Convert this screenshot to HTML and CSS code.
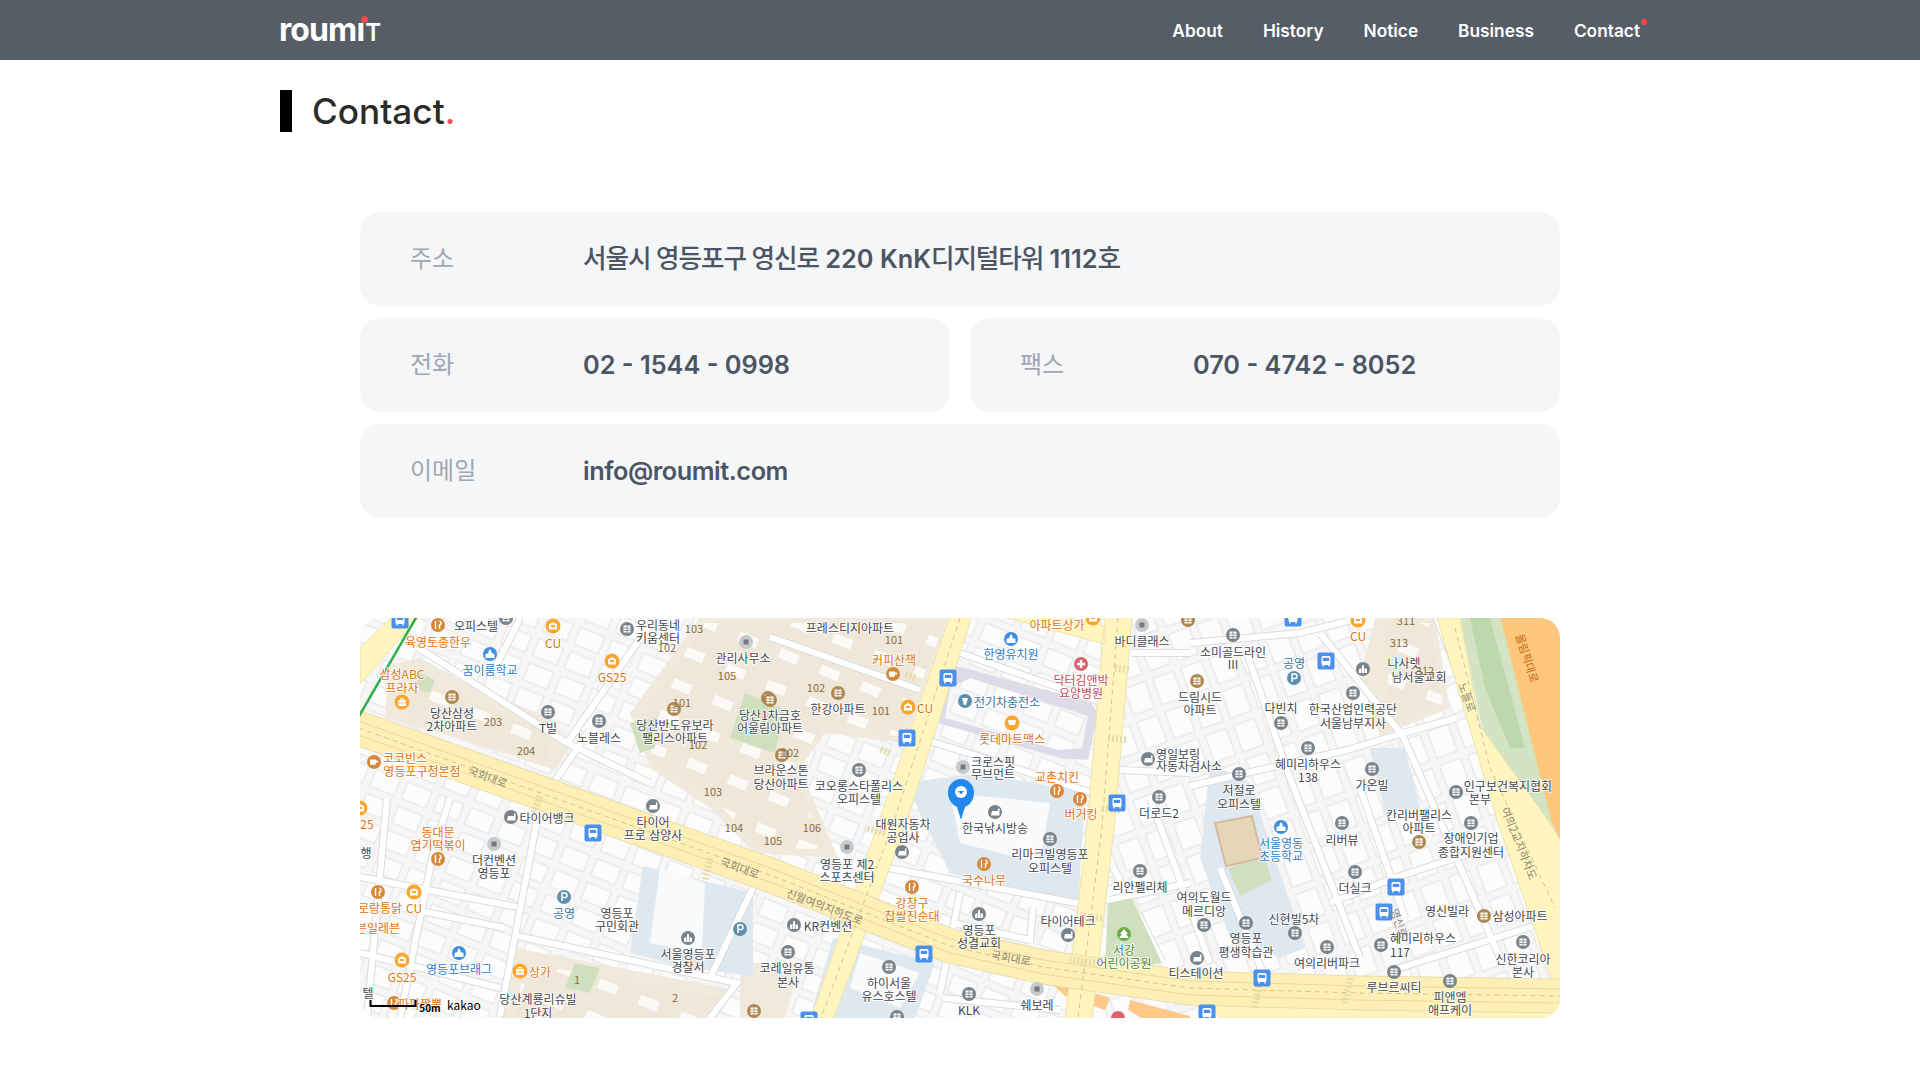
FILE: index.html
```html
<!DOCTYPE html>
<html lang="ko">
<head>
<meta charset="utf-8">
<title>Contact - roumit</title>
<link rel="stylesheet" href="styles.css">
</head>
<body>
<header class="topbar">
  <div class="topbar-inner">
    <a class="logo">roumı<span class="logo-cap">T</span><span class="logo-dot"></span></a>
    <nav class="nav">
      <a>About</a>
      <a>History</a>
      <a>Notice</a>
      <a>Business</a>
      <a class="nav-active">Contact</a>
    </nav>
  </div>
</header>
<main class="page">
  <h1 class="title">Contact<span class="title-dot">.</span></h1>
  <section class="content">
    <div class="info-grid">
      <div class="card card-wide"><span class="card-label">주소</span><span class="card-value card-value-ko"><span class="ko">서울시 영등포구 영신로</span> 220 KnK<span class="ko">디지털타워</span> 1112<span class="ko">호</span></span></div>
      <div class="card"><span class="card-label">전화</span><span class="card-value">02 - 1544 - 0998</span></div>
      <div class="card"><span class="card-label">팩스</span><span class="card-value">070 - 4742 - 8052</span></div>
      <div class="card card-wide"><span class="card-label">이메일</span><span class="card-value card-value-mail">info@roumit.com</span></div>
    </div>
    <div class="map">
      <svg class="map-svg" viewBox="0 0 1200 400" width="1200" height="400" xmlns="http://www.w3.org/2000/svg">
        <defs>
          <pattern id="lotA" width="34" height="26" patternUnits="userSpaceOnUse" patternTransform="rotate(22)">
            <rect width="34" height="26" fill="#f6f6f6"/>
            <rect x="4" y="4" width="26" height="18" fill="#fcfcfc" stroke="#e2e2e2"/>
          </pattern>
          <pattern id="lotB" width="30" height="36" patternUnits="userSpaceOnUse" patternTransform="rotate(-20)">
            <rect width="30" height="36" fill="#f6f6f6"/>
            <rect x="4" y="4" width="22" height="28" fill="#fcfcfc" stroke="#e2e2e2"/>
          </pattern>
          <pattern id="lotC" width="44" height="34" patternUnits="userSpaceOnUse" patternTransform="rotate(22)">
            <rect width="44" height="34" fill="#efe7da"/>
            <rect x="6" y="6" width="20" height="10" fill="#fbfaf7"/>
          </pattern>
          <g id="roads">
            <path d="M57 29L207 125L290 165M207 125L270 35L295 0M160 0L130 60M190 170L230 112"/>
            <path d="M0 259L157 289M73 235L40 400M177 202L140 398M157 318L377 365L350 400M27 180L7 400M90 180L80 212M0 335L140 370M45 290L145 310"/>
            <path d="M410 19L560 72M567 122L742 178M600 35L743 85M523 249L727 287M600 275L580 375M673 289L670 325M593 305L670 322M583 380L700 392"/>
            <path d="M753 249L803 345M750 282L830 265M772 35L830 35M760 152L830 155M887 35L930 160L1000 340M960 15L1043 118L1140 340M1043 115L1097 100M830 168L987 132L1043 115M830 25L940 15L1000 0"/>
            <path d="M970 285L1037 259L1130 229M1033 352L1193 302M1077 0L1190 300L1200 330M860 250L905 360M790 180L850 345M1000 170L1045 300M400 255L350 360"/>
          </g>
          <g id="b"><circle r="7" fill="#78838c"/><rect x="-3.5" y="-3.5" width="7" height="7" fill="#fff"/><path d="M-3.5 -1H3.5M-3.5 1.5H3.5M0 -3.5V3.5" stroke="#78838c" stroke-width=".8"/></g>
          <g id="a"><circle r="7" fill="#ae8850"/><rect x="-3.5" y="-3.5" width="7" height="7" fill="#fff"/><path d="M-3.5 -1H3.5M-3.5 1.5H3.5M0 -3.5V3.5" stroke="#ae8850" stroke-width=".8"/></g>
          <g id="l"><circle r="7" fill="#c6cacd"/><rect x="-2.5" y="-2.5" width="5" height="5" fill="#6f7a82"/></g>
          <g id="t"><circle r="7" fill="#78838c"/><path d="M-4 3.5L-3 -1H3V-3.5H4.5V3.5Z" fill="#fff"/></g>
          <g id="c"><circle r="7" fill="#78838c"/><path d="M-4 4V0L-1.5 -1V4ZM-1 4V-3L0 -4.5L1 -3V4ZM1.5 4V-1L4 0V4Z" fill="#fff"/></g>
          <g id="o"><circle r="7.5" fill="#fba62f"/><path d="M-4 3.5V-1.5L0 -4L4 -1.5V3.5Z" fill="#fff"/><rect x="-2" y="-1" width="4" height="2" fill="#fba62f"/></g>
          <g id="f"><circle r="7" fill="#d8883a"/><path d="M-2.5 -4V4M1.5 -4C3.5 -3 3.5 0 1.5 0V4" stroke="#fff" stroke-width="1.4" fill="none"/></g>
          <g id="k"><circle r="7" fill="#d8883a"/><path d="M-4 -2.5H2V1C2 2.5 1 3 -1 3C-3 3 -4 2.5 -4 1ZM2 -1.5H4V0.5H2" fill="#fff"/></g>
          <g id="m"><circle r="7.5" fill="#fba62f"/><rect x="-4" y="-2" width="8" height="6" rx="1" fill="#fff"/><path d="M-1.5 -2V-3.5H1.5V-2" stroke="#fff" fill="none"/><path d="M-4 1H4" stroke="#fba62f" stroke-width=".7"/></g>
          <g id="s"><circle r="7" fill="#3f8fdc"/><path d="M-4.5 4V0L-1.5 -1V-2.5L0 -5L1.500 -2.5V-1L4.5 0V4Z" fill="#fff"/></g>
          <g id="p"><circle r="7" fill="#5e90ad"/><path d="M-2 4V-4H1C3.6 -4 3.6 0.5 1 0.5H-2" stroke="#fff" stroke-width="1.5" fill="none"/></g>
          <g id="u"><rect x="-8.5" y="-8.5" width="17" height="17" rx="2" fill="#4a90ec"/><rect x="-4.5" y="-5" width="9" height="9" rx="1.5" fill="#fff"/><rect x="-3.2" y="-3.2" width="6.4" height="3.2" fill="#4a90ec"/><path d="M-3 4V5.5M3 4V5.5" stroke="#fff" stroke-width="1.4"/></g>
        </defs>

        <rect width="760" height="400" fill="url(#lotA)"/>
        <rect x="740" width="460" height="400" fill="url(#lotB)"/>

        <path class="zone-beige" d="M270 95L340 0H590L545 125L465 115L440 150L478 240L395 235L350 190L290 150Z"/>
        <path class="zone-apt" d="M280 100L345 5H585L540 118L465 108L432 150L465 232L398 228L355 182L295 145Z"/>
        <path class="zone-beige" d="M28 48L60 40L115 70L190 100L210 128L195 152L90 118L25 100Z"/>
        <path class="zone-apt" d="M60 60L130 90L185 115L190 145L90 112L45 95Z"/>
        <path class="zone-beige" d="M1015 0H1075L1090 90L1020 118L1000 60Z"/>
        <path class="zone-apt" d="M1025 5H1070L1083 85L1030 105Z"/>
        <path class="zone-beige" d="M155 330L375 372L350 400H140Z"/>
        <path class="zone-apt" d="M165 345L365 380L345 400H155Z"/>
        <path class="zone-beige" d="M380 345L440 345L425 400H380Z"/>
        <path class="zone-park" d="M60 55L75 62L70 75L55 70Z"/>
        <path class="zone-park" d="M385 75L425 92L415 135L370 120Z"/>
        <path class="zone-park" d="M270 105L295 100L295 130L280 135Z"/>
        <path class="zone-park" d="M215 345L240 350L230 375L205 370Z"/>

        <path class="zone-lot" d="M283 248L393 275L393 358L330 350L270 335Z"/>
        <path class="zone-white" d="M300 250L345 265L342 335L290 325Z"/>
        <path class="zone-lot" d="M545 165L620 155L725 175L718 288L590 255L570 215Z"/>
        <path class="zone-white" d="M590 175L690 185L680 245L600 225Z"/>
        <path class="zone-lot" d="M473 320L575 345L555 400H450Z"/>
        <path class="zone-white" d="M500 335L560 355L540 390L490 370Z"/>
        <path class="zone-lot" d="M850 145L890 165L945 330L920 340L870 320L840 240Z"/>
        <path class="zone-lot" d="M1010 130L1045 130L1060 190L1025 195Z"/>
        <path class="zone-purple" d="M575 45L590 55L578 105L700 140L728 142L738 95L730 84L605 50ZM590 70L585 100L698 132L722 130L728 98L610 60Z" fill-rule="evenodd"/>
        <path class="zone-sport" d="M855 205L892 198L902 240L866 248Z"/>
        <path class="zone-park" d="M868 250L905 240L912 262L880 278Z"/>
        <path class="zone-river" d="M1100 0H1142L1180 130L1200 170V270L1175 205L1135 150L1120 100Z"/>
        <path class="zone-river-dark" d="M1110 0H1130L1165 130L1150 130L1125 70Z"/>
        <path class="zone-orange" d="M1140 -2H1202V225L1192 205Z"/>
        <path class="zone-park" d="M1186 0C1198 2 1200 10 1200 20V0Z"/>
        <path class="zone-strip" d="M683 358L750 380L745 392L705 378ZM770 382L830 398V402H785L768 392Z"/>

        <use href="#roads" class="road-case"/>
        <use href="#roads" class="road-fill"/>
        <path class="zone-park" d="M748 285L772 280L802 345L745 352Z"/>

        <path class="road-yellow" d="M590 -2H612L545 209L473 402H450L517 209ZM745 -2H772L755 202L732 402H705L727 209ZM640 -2L745 26V8L700 -2ZM33 -2H60L0 66V30Z"/>
        <path class="road-yellow" d="M1077 0H1100L1120 108L1190 205L1202 225V365H1193L1137 202Z"/>
        <path class="road-yellow" d="M830 356L1200 362V400H860Z"/>
        <path class="road-case-main" d="M-10 107L410 257L590 328L683 349L830 370L1000 375L1200 378"/>
        <path class="road-main" d="M-10 107L410 257L590 328L683 349L830 370L1000 375L1200 378"/>
        <path class="road-lane" d="M-10 100L410 250L590 321L683 342L830 363L1000 368L1200 371M-10 114L410 264L590 335L683 356L830 377L1000 382L1200 385"/>
        <path class="road-center" d="M-10 107L410 257L590 328L683 349L830 370L1000 375L1200 378"/>
        <path class="road-subway" d="M57 -2L-2 100"/>
        <path class="road-center" d="M600 0L532 209L461 400M758 0L742 209L718 400M1095 10L1130 150L1195 290"/>
        <path class="road-stripes" d="M555 60L545 56M530 135L520 131M755 50L770 52M748 120L768 122M742 190L760 192M525 215L505 210M470 300L490 305M742 300L720 298M735 345L710 342M350 240L345 262M180 178L172 200M990 360L985 385M900 360L895 390"/>

        <g class="ic">
          <use href="#u" x="40" y="2"/><use href="#f" x="78" y="7"/><use href="#b" x="146" y="0"/><use href="#o" x="193" y="8"/><use href="#b" x="267" y="11"/><use href="#l" x="386" y="24"/><use href="#s" x="130" y="36"/><use href="#o" x="252" y="43"/><use href="#m" x="42" y="84"/><use href="#a" x="92" y="79"/><use href="#b" x="188" y="94"/><use href="#b" x="239" y="103"/><use href="#a" x="314" y="91"/><use href="#a" x="408" y="80"/><use href="#k" x="14" y="144"/><use href="#t" x="293" y="188"/><use href="#t" x="151" y="199"/><use href="#u" x="233" y="215"/><use href="#o" x="0" y="190"/>
          <use href="#f" x="78" y="241"/><use href="#l" x="134" y="226"/><use href="#f" x="18" y="274"/><use href="#o" x="54" y="274"/><use href="#p" x="204" y="279"/><use href="#p" x="380" y="311"/><use href="#c" x="328" y="320"/><use href="#s" x="99" y="335"/><use href="#o" x="42" y="342"/><use href="#m" x="160" y="353"/><use href="#f" x="34" y="385"/><use href="#a" x="394" y="393"/>
          <use href="#o" x="733" y="0"/><use href="#l" x="782" y="7"/><use href="#s" x="651" y="21"/><use href="#a" x="828" y="2"/><use href="#k" x="533" y="56"/><use href="#u" x="588" y="60"/><use href="#a" x="478" y="75"/><use href="#a" x="410" y="82"/><use href="#o" x="548" y="89"/><use href="#u" x="547" y="120"/><use href="#a" x="422" y="137"/><use href="#l" x="603" y="149"/><use href="#t" x="788" y="141"/><use href="#b" x="499" y="152"/><use href="#f" x="697" y="173"/><use href="#f" x="720" y="181"/><use href="#u" x="757" y="185"/><use href="#b" x="799" y="179"/><use href="#t" x="635" y="194"/>
          <use href="#l" x="487" y="229"/><use href="#t" x="542" y="234"/><use href="#b" x="690" y="221"/><use href="#f" x="624" y="246"/><use href="#b" x="780" y="253"/><use href="#f" x="552" y="269"/><use href="#c" x="619" y="296"/><use href="#t" x="708" y="317"/><use href="#c" x="434" y="307"/><use href="#b" x="428" y="334"/><use href="#u" x="564" y="336"/><use href="#b" x="529" y="349"/><use href="#l" x="677" y="371"/><use href="#b" x="609" y="376"/><use href="#b" x="537" y="399"/><use href="#u" x="449" y="402"/>
          <use href="#u" x="933" y="0"/><use href="#o" x="998" y="2"/><use href="#b" x="873" y="17"/><use href="#u" x="966" y="43"/><use href="#c" x="1003" y="51"/><use href="#p" x="934" y="60"/><use href="#a" x="837" y="63"/><use href="#b" x="993" y="75"/><use href="#b" x="921" y="105"/><use href="#b" x="948" y="130"/><use href="#b" x="879" y="156"/><use href="#b" x="1012" y="151"/><use href="#b" x="1096" y="174"/><use href="#b" x="1111" y="205"/><use href="#b" x="982" y="205"/><use href="#s" x="921" y="209"/>
          <use href="#a" x="1059" y="224"/><use href="#b" x="995" y="254"/><use href="#u" x="1036" y="269"/><use href="#u" x="1024" y="294"/><use href="#a" x="1124" y="298"/><use href="#b" x="844" y="307"/><use href="#b" x="886" y="305"/><use href="#b" x="935" y="315"/><use href="#b" x="967" y="329"/><use href="#b" x="1021" y="327"/><use href="#b" x="1163" y="324"/><use href="#t" x="837" y="340"/><use href="#b" x="1034" y="354"/><use href="#b" x="1090" y="363"/><use href="#u" x="902" y="360"/><use href="#u" x="847" y="395"/>
          <circle cx="605" cy="83" r="7" fill="#5e90ad"/><path d="M602 80H608L606 87H604Z" fill="#fff"/>
          <circle cx="652" cy="105" r="7.5" fill="#fba62f"/><path d="M648 102H656L655 107H649Z" fill="#fff"/>
          <circle cx="721" cy="46" r="7" fill="#d9646e"/><path d="M721 42V50M717 46H725" stroke="#fff" stroke-width="2.4"/>
          <circle cx="764" cy="316" r="7" fill="#6eab45"/><path d="M764 311L768 316H766L769 320H759L762 316H760Z" fill="#fff"/>
          <circle cx="758" cy="400" r="7" fill="#d9646e"/>
        </g>

        <g class="lb lb-d">
          <text x="116" y="7">오피스텔</text><text x="298" y="6">우리동네</text><text x="298" y="19">키움센터</text><text x="383" y="39">관리사무소</text>
          <text x="92" y="94">당산삼성</text><text x="92" y="107">2차아파트</text><text x="188" y="109">T빌</text><text x="239" y="119">노블레스</text>
          <text x="315" y="106">당산반도유보라</text><text x="315" y="119">팰리스아파트</text><text x="187" y="199">타이어뱅크</text><text x="293" y="203">타이어</text><text x="293" y="216">프로 삼양사</text>
          <text x="134" y="241">더컨벤션</text><text x="134" y="254">영등포</text><text x="6" y="234">행</text><text x="257" y="294">영등포</text><text x="257" y="307">구민회관</text>
          <text x="328" y="335">서울영등포</text><text x="328" y="348">경찰서</text><text x="8" y="374">텔</text><text x="178" y="380">당산계룡리슈빌</text><text x="178" y="394">1단지</text>
          <text x="427" y="349">코레일유통</text><text x="428" y="363">본사</text>
          <text x="490" y="9">프레스티지아파트</text><text x="782" y="22">바디클래스</text><text x="478" y="90">한강아파트</text><text x="410" y="96">당산1차금호</text><text x="410" y="109">어울림아파트</text>
          <text x="421" y="151">브라운스톤</text><text x="421" y="165">당산아파트</text><text x="633" y="143">크로스핏</text><text x="633" y="155">무브먼트</text><text x="818" y="135">영일보링</text><text x="829" y="147">자동차검사소</text>
          <text x="499" y="167">코오롱스타폴리스</text><text x="499" y="180">오피스텔</text><text x="799" y="194">더로드2</text><text x="543" y="205">대원자동차</text><text x="543" y="218">공업사</text><text x="635" y="209">한국낚시방송</text>
          <text x="487" y="245">영등포 제2</text><text x="487" y="258">스포츠센터</text><text x="690" y="235">리마크빌영등포</text><text x="690" y="249">오피스텔</text><text x="780" y="268">리안펠리체</text><text x="844" y="278">여의도월드</text><text x="844" y="292">메르디앙</text>
          <text x="708" y="302">타이어테크</text><text x="468" y="307">KR컨벤션</text><text x="619" y="311">영등포</text><text x="619" y="324">성결교회</text><text x="836" y="354">티스테이션</text><text x="529" y="364">하이서울</text><text x="529" y="377">유스호스텔</text><text x="677" y="386">쉐보레</text><text x="609" y="391">KLK</text>
          <text x="873" y="33">소미골드라인</text><text x="873" y="45">III</text><text x="840" y="78">드림시드</text><text x="840" y="91">아파트</text><text x="1044" y="44">나사렛</text><text x="1059" y="58">남서울교회</text><text x="921" y="89">다빈치</text>
          <text x="993" y="90">한국산업인력공단</text><text x="993" y="104">서울남부지사</text><text x="948" y="145">혜미리하우스</text><text x="948" y="158">138</text><text x="1012" y="166">가온빌</text><text x="879" y="171">저절로</text><text x="879" y="185">오피스텔</text>
          <text x="1148" y="167">인구보건복지협회</text><text x="1120" y="180">본부</text><text x="1059" y="196">칸리버팰리스</text><text x="1059" y="209">아파트</text>
          <text x="982" y="221">리버뷰</text><text x="1111" y="219">장애인기업</text><text x="1111" y="233">종합지원센터</text><text x="995" y="269">더실크</text><text x="934" y="300">신현빌5차</text><text x="1087" y="292">영신빌라</text><text x="1160" y="297">삼성아파트</text>
          <text x="886" y="319">영등포</text><text x="886" y="333">평생학습관</text><text x="1063" y="319">혜미리하우스</text><text x="1040" y="333">117</text><text x="967" y="344">여의리버파크</text><text x="1163" y="340">신한코리아</text><text x="1163" y="353">본사</text><text x="1034" y="368">루브르씨티</text><text x="1090" y="378">피앤엠</text><text x="1090" y="391">애프케이</text>
        </g>
        <g class="lb lb-o">
          <text x="78" y="23">육영토종한우</text><text x="193" y="24">CU</text><text x="252" y="58">GS25</text><text x="42" y="55">삼성ABC</text><text x="42" y="69">프라자</text><text x="45" y="139">코코빈스</text><text x="62" y="152">영등포구청본점</text><text x="7" y="205">25</text>
          <text x="78" y="213">동대문</text><text x="78" y="226">엽기떡볶이</text><text x="20" y="289">로랑통닭</text><text x="54" y="289">CU</text><text x="18" y="309">븐일레븐</text><text x="180" y="353">상가</text><text x="42" y="358">GS25</text><text x="60" y="385">파파짱뽕</text>
          <text x="697" y="6">아파트상가</text><text x="534" y="41">커피산책</text><text x="565" y="89">CU</text><text x="652" y="120">롯데마트맥스</text><text x="697" y="158">교촌치킨</text><text x="721" y="195">버거킹</text><text x="624" y="261">국수나무</text><text x="552" y="284">강창구</text><text x="552" y="297">찹쌀진순대</text><text x="998" y="17">CU</text>
        </g>
        <g class="lb lb-b">
          <text x="130" y="51">꿈이룸학교</text><text x="99" y="350">영등포브래그</text><text x="651" y="35">한영유치원</text><text x="921" y="224">서울영동</text><text x="921" y="237">초등학교</text>
        </g>
        <g class="lb lb-t">
          <text x="204" y="294">공영</text><text x="647" y="83">전기차충전소</text><text x="934" y="44">공영</text>
        </g>
        <g class="lb lb-r"><text x="721" y="61">닥터김앤박</text><text x="721" y="74">요양병원</text></g>
        <g class="lb lb-g"><text x="764" y="331">서강</text><text x="764" y="344">어린이공원</text></g>
        <g class="lb lb-n">
          <text x="334" y="10">103</text><text x="307" y="29">102</text><text x="367" y="57">105</text><text x="322" y="84">101</text><text x="338" y="126">102</text><text x="133" y="103">203</text><text x="166" y="132">204</text><text x="353" y="173">103</text><text x="374" y="209">104</text><text x="217" y="361">1</text><text x="315" y="379">2</text>
          <text x="534" y="21">101</text><text x="456" y="69">102</text><text x="521" y="92">101</text><text x="430" y="134">102</text><text x="452" y="209">106</text><text x="413" y="222">105</text><text x="1046" y="2">311</text><text x="1039" y="24">313</text><text x="1065" y="52">312</text>
        </g>
        <g class="lb lb-road">
          <text x="128" y="158" transform="rotate(20 128 158)">국회대로</text>
          <text x="380" y="249" transform="rotate(20 380 249)">국회대로</text>
          <text x="465" y="288" transform="rotate(21 465 288)">신월여의지하도로</text>
          <text x="651" y="339" transform="rotate(10 651 339)">국회대로</text>
          <text x="1108" y="79" transform="rotate(70 1108 79)">노들로</text>
          <text x="1160" y="225" transform="rotate(68 1160 225)">여의2교지하차도</text>
          <text x="1040" y="305" transform="rotate(70 1040 305)">영신로</text>
        </g>
        <text x="1168" y="40" transform="rotate(72 1168 40)" class="lb-olympic">올림픽대로</text>

        <path class="pin" d="M601 202L597 189C591 186 588 181 588 174C588 167 594 161 601 161C608 161 614 167 614 174C614 181 611 186 605 189Z"/>
        <circle cx="601" cy="174" r="6" fill="#fff"/>
        <path d="M598 173H604L601 176.500Z" fill="#2288ee"/>

        <path class="scale" d="M10.500 382V388H55.500V382"/>
        <text x="70" y="389" class="lb-scale">50m</text>
        <text x="104" y="386" class="lb-kakao">kakao</text>
      </svg>
    </div>
  </section>
</main>
</body>
</html>
```
FILE: styles.css
```css
* { box-sizing: border-box; }
html, body { margin: 0; padding: 0; background: #fff; }
body { font-family: Inter, "Noto Sans CJK KR", sans-serif; color: #2b2b2b; overflow-x: hidden; }

.topbar { height: 60px; background: #565d67; }
.topbar-inner { width: 1360px; height: 60px; margin: 0 auto; display: flex; align-items: center; justify-content: space-between; }
.logo { position: relative; display: inline-block; margin-left: -1px; margin-top: 3px; font-family: Inter, sans-serif; font-weight: 700; font-size: 32px; line-height: 40px; letter-spacing: -0.9px; color: #fff; }
.logo-cap { font-size: 24px; font-weight: 600; margin-left: 1px; }
.logo-dot { position: absolute; left: 82px; top: 6px; width: 7px; height: 7px; border-radius: 50%; background: #f5484f; }
.nav { display: flex; gap: 40px; margin-top: 2px; }
.nav a { font-size: 17.3px; font-weight: 600; color: #fff; line-height: 20px; }
.nav-active { position: relative; }
.nav-active::after { content: ""; position: absolute; right: -7px; top: -2px; width: 6px; height: 6px; border-radius: 50%; background: #f5484f; }

.page { width: 1360px; margin: 0 auto; }
.title { display: flex; align-items: center; height: 42px; margin: 30px 0 0; font-size: 35.2px; font-weight: 500; line-height: 42px; color: #2b2b2b; }
.title::before { content: ""; width: 12px; height: 42px; margin-right: 20px; background: #000; }
.title-dot { color: #f5484f; }

.content { width: 1200px; margin: 80px auto 0; }
.info-grid { display: grid; grid-template-columns: 1fr 1fr; column-gap: 20px; row-gap: 12px; }
.card { display: flex; align-items: center; height: 94px; padding-left: 50px; background: #f5f6f8; border-radius: 20px; }
.card-wide { grid-column: 1 / 3; }
.card-label { width: 173px; flex: none; font-size: 24px; font-weight: 400; line-height: 30px; color: #a0a7b3; }
.card-value { font-size: 25.3px; font-weight: 600; line-height: 30px; color: #4b5563; }
.card-value-ko { padding-bottom: 1px; }
.card-value-mail { letter-spacing: -0.45px; }
.ko { font-size: 25.6px; font-weight: 500; letter-spacing: -1.1px; }

.map { width: 1200px; height: 400px; margin-top: 100px; border-radius: 20px; overflow: hidden; }
.map-svg { display: block; background: #f6f6f6; }

.zone-beige { fill: #f1e9dc; }
.zone-apt { fill: url(#lotC); }
.zone-park { fill: #cfe0bf; }
.zone-lot { fill: #dde8f0; }
.zone-white { fill: #f9fafb; }
.zone-purple { fill: #dcdce8; }
.zone-sport { fill: #e6d6b8; stroke: #d9b8a0; stroke-width: 2; }
.zone-river { fill: #d3e4c4; }
.zone-river-dark { fill: #bcd8ac; }
.zone-orange { fill: #ffc67c; }
.zone-strip { fill: #ffc98a; }
.road-case, .road-fill { fill: none; stroke-linecap: butt; }
.road-case { stroke: #dcdcdc; stroke-width: 8; }
.road-fill { stroke: #ffffff; stroke-width: 6; }
.road-yellow { fill: #fff5bd; stroke: #ece3ae; stroke-width: 1; }
.road-main { fill: none; stroke: #fef0b4; stroke-width: 33; }
.road-case-main { fill: none; stroke: #e9ddb0; stroke-width: 35; }
.road-lane { fill: none; stroke: #e8d8a4; stroke-width: 1; }
.road-center { fill: none; stroke: #cfc498; stroke-width: 1; stroke-dasharray: 5 4; }
.road-subway { fill: none; stroke: #2fae4e; stroke-width: 2.5; }
.road-stripes { fill: none; stroke: #e6dca8; stroke-width: 7; stroke-dasharray: 2 2; }

.lb text, .lb-olympic, .lb-scale, .lb-kakao { font-family: "Noto Sans CJK KR", sans-serif; text-anchor: middle; dominant-baseline: central; paint-order: stroke; stroke: #fff; stroke-width: 2px; stroke-opacity: .85; stroke-linejoin: round; }
.lb text { font-size: 12px; }
.lb-d text { fill: #43484e; }
.lb-o text { fill: #dd7410; }
.lb-b text { fill: #2f80c8; }
.lb-t text { fill: #3a7699; }
.lb-r text { fill: #c05060; }
.lb-g text { fill: #4f8a2f; }
.lb-n text { fill: #8a6c38; font-size: 11px; stroke: none; }
.lb-road text { fill: #8a8674; font-size: 11px; stroke: none; }
.lb-olympic { fill: #c46a10; font-size: 11px; stroke: none; }
.lb-scale { fill: #000; font-size: 10px; font-weight: 700; stroke-width: 1px; }
.lb-kakao { fill: #000; font-size: 12px; stroke: none; }
.pin { fill: #2288ee; }
.scale { fill: none; stroke: #000; stroke-width: 2; }
```
